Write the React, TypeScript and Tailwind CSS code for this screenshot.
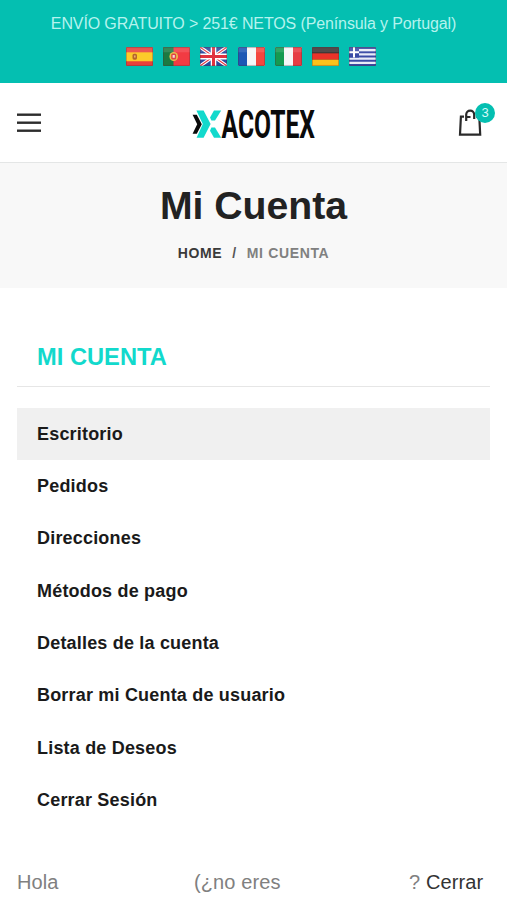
import type { ReactNode } from "react";

const flags: { name: string; art: ReactNode }[] = [
  {
    name: "Español",
    art: (
      <>
        <rect width="27" height="18" fill="#e8403a" />
        <rect y="5" width="27" height="8.5" fill="#fccb2a" />
        <rect x="6.5" y="6.5" width="4.5" height="5.5" rx="1.5" fill="#b5652c" />
        <rect x="8" y="8" width="1.6" height="2" fill="#e9b36a" />
      </>
    ),
  },
  {
    name: "Português",
    art: (
      <>
        <rect width="27" height="18" fill="#f23b43" />
        <rect width="10.5" height="18" fill="#1b7a42" />
        <circle cx="10.7" cy="9" r="4.3" fill="#e6c14b" />
        <rect x="8.2" y="6.1" width="5" height="5.8" rx="1.5" fill="#e04545" />
        <rect x="9.6" y="7.6" width="2.2" height="2.6" fill="#f6d8d8" />
      </>
    ),
  },
  {
    name: "English",
    art: (
      <>
        <rect width="27" height="18" fill="#2a4ba0" />
        <path d="M0 0L27 18M27 0L0 18" stroke="#fff" strokeWidth="3.2" />
        <path d="M0 0L27 18M27 0L0 18" stroke="#e0323f" strokeWidth="1" />
        <path d="M13.5 0V18M0 9H27" stroke="#fff" strokeWidth="5.6" />
        <path d="M13.5 0V18M0 9H27" stroke="#e0323f" strokeWidth="3" />
      </>
    ),
  },
  {
    name: "Français",
    art: (
      <>
        <rect width="27" height="18" fill="#f6f6f8" />
        <rect width="9" height="18" fill="#1c57b5" />
        <rect x="18" width="9" height="18" fill="#f4473f" />
      </>
    ),
  },
  {
    name: "Italiano",
    art: (
      <>
        <rect width="27" height="18" fill="#f6f6f8" />
        <rect width="9" height="18" fill="#159a50" />
        <rect x="18" width="9" height="18" fill="#e63c45" />
      </>
    ),
  },
  {
    name: "Deutsch",
    art: (
      <>
        <rect width="27" height="18" fill="#3b3433" />
        <rect y="6" width="27" height="6" fill="#ea3329" />
        <rect y="12" width="27" height="6" fill="#fcc21b" />
      </>
    ),
  },
  {
    name: "Ελληνικά",
    art: (
      <>
        <rect width="27" height="18" fill="#3a4ba6" />
        <path d="M0 3H27M0 7H27M0 11H27M0 15H27" stroke="#e9ecf8" strokeWidth="2" />
        <rect width="10" height="10" fill="#3a4ba6" />
        <path d="M5 0V10M0 5H10" stroke="#fff" strokeWidth="2" />
      </>
    ),
  },
];

const menu = [
  "Escritorio",
  "Pedidos",
  "Direcciones",
  "Métodos de pago",
  "Detalles de la cuenta",
  "Borrar mi Cuenta de usuario",
  "Lista de Deseos",
  "Cerrar Sesión",
];

function Flag({ name, art }: { name: string; art: ReactNode }) {
  return (
    <svg
      role="img"
      aria-label={name}
      viewBox="0 0 27 18"
      preserveAspectRatio="none"
      className="h-[19px] w-[27px] rounded-[1px]"
    >
      {art}
      <rect width="27" height="5" fill="#fff" opacity="0.12" />
      <rect x="0.5" y="0.5" width="26" height="17" fill="none" stroke="#4b3038" strokeOpacity="0.3" />
    </svg>
  );
}

function Logo() {
  return (
    <svg viewBox="0 0 124 48" className="h-12 w-[124px] overflow-visible" aria-label="Xacotex">
      <path d="M0.6 15.8H4.8L9.8 25.2L4.8 34.8H0.6L5.2 25.2Z" fill="#0a0a0a" />
      <path d="M4.4 11.4H11.6L18.6 25L11.6 38.8H4.6L10.8 25Z" fill="#12d9cc" />
      <path d="M22 11.4H29.2L23 21.6H19.4L18 18.4Z" fill="#12d9cc" />
      <path d="M19.4 28.4H23L29.2 38.8H22L18 31.8Z" fill="#12d9cc" />
      <text
        transform="translate(29.6 38.6) scale(0.64 1)"
        fill="#0a0a0a"
        className="font-[Roboto,sans-serif] text-[38.5px] font-bold"
      >
        ACOTEX
      </text>
    </svg>
  );
}

export default function App() {
  return (
    <div className="h-[900px] w-[507px] overflow-hidden bg-white font-['Liberation_Sans',Arial,sans-serif]">
      <div className="flex h-[83px] flex-col items-center bg-[#04bfb1] pt-[13px]">
        <p className="text-[16px] leading-[22px] tracking-[-0.12px] whitespace-nowrap text-[#b5f3ee]">
          ENVÍO GRATUITO &gt; 251€ NETOS (Península y Portugal)
        </p>
        <div className="mt-3 flex gap-[10.2px] pr-[5px]">
          {flags.map((flag) => (
            <Flag key={flag.name} name={flag.name} art={flag.art} />
          ))}
        </div>
      </div>

      <header className="flex h-20 items-center justify-between border-b border-[#e4e6e6] pr-3 pl-[17px]">
        <button aria-label="Menu" className="flex w-[33px] flex-col">
          <svg viewBox="0 0 24 20" className="h-5 w-6" fill="#2c2c2c">
            <rect y="0.5" width="24" height="2.4" />
            <rect y="8.5" width="24" height="2.4" />
            <rect y="16.5" width="24" height="2.4" />
          </svg>
        </button>
        <Logo />
        <button aria-label="Carrito" className="relative h-9 w-[37px]">
          <svg viewBox="0 0 37 36" className="h-9 w-[37px]" fill="none" stroke="#2a2a2a" strokeWidth="2.2">
            <path d="M6 11.6H2.9L2 29.6H22.2L21.3 11.6H18" />
            <path d="M8.2 16V9.6A4 4 0 0 1 16.2 9.6V14M8.2 12H12.5" />
          </svg>
          <span className="absolute -top-[2px] right-0 flex size-5 items-center justify-center rounded-full bg-[#04bfb1] text-[13px] text-[#d6fbf8]">
            3
          </span>
        </button>
      </header>

      <div className="flex h-[125px] flex-col items-center bg-[#f8f8f8] pt-[18px]">
        <h1 className="text-[39.2px] leading-[50px] font-bold text-[#222]">Mi Cuenta</h1>
        <p className="mt-3 flex text-[14px] leading-5 font-bold tracking-[0.65px]">
          <span className="text-[#3a3a3a]">HOME</span>
          <span className="mx-[10px] text-[#555]">/</span>
          <span className="text-[#808080]">MI CUENTA</span>
        </p>
      </div>

      <main className="px-[17px] pt-[52px]">
        <h2 className="h-[47px] border-b border-[#e6e6e6] pl-5 text-[23.7px] leading-[34px] font-bold text-[#12d9cc]">
          MI CUENTA
        </h2>
        <nav className="mt-[20.5px] flex flex-col">
          {menu.map((item, i) => (
            <a
              key={item}
              className={
                i === 0
                  ? "h-[52.4px] w-[473px] bg-[#f0f0f0] pl-5 text-[18px] leading-[52.4px] font-bold tracking-[0.19px] text-[#1a1a1a]"
                  : "h-[52.4px] w-[473px] pl-5 text-[18px] leading-[52.4px] font-bold tracking-[0.19px] text-[#1a1a1a]"
              }
            >
              {item}
            </a>
          ))}
        </nav>
        <p className="mt-[39.5px] flex text-[20px] leading-8 tracking-[0.1px] whitespace-nowrap text-[#808080]">
          <span className="w-[177px]">Hola</span>
          <span className="w-[215px]">(¿no eres</span>
          <span>
            ? <a className="text-[#333]">Cerrar</a>
          </span>
        </p>
      </main>
    </div>
  );
}
